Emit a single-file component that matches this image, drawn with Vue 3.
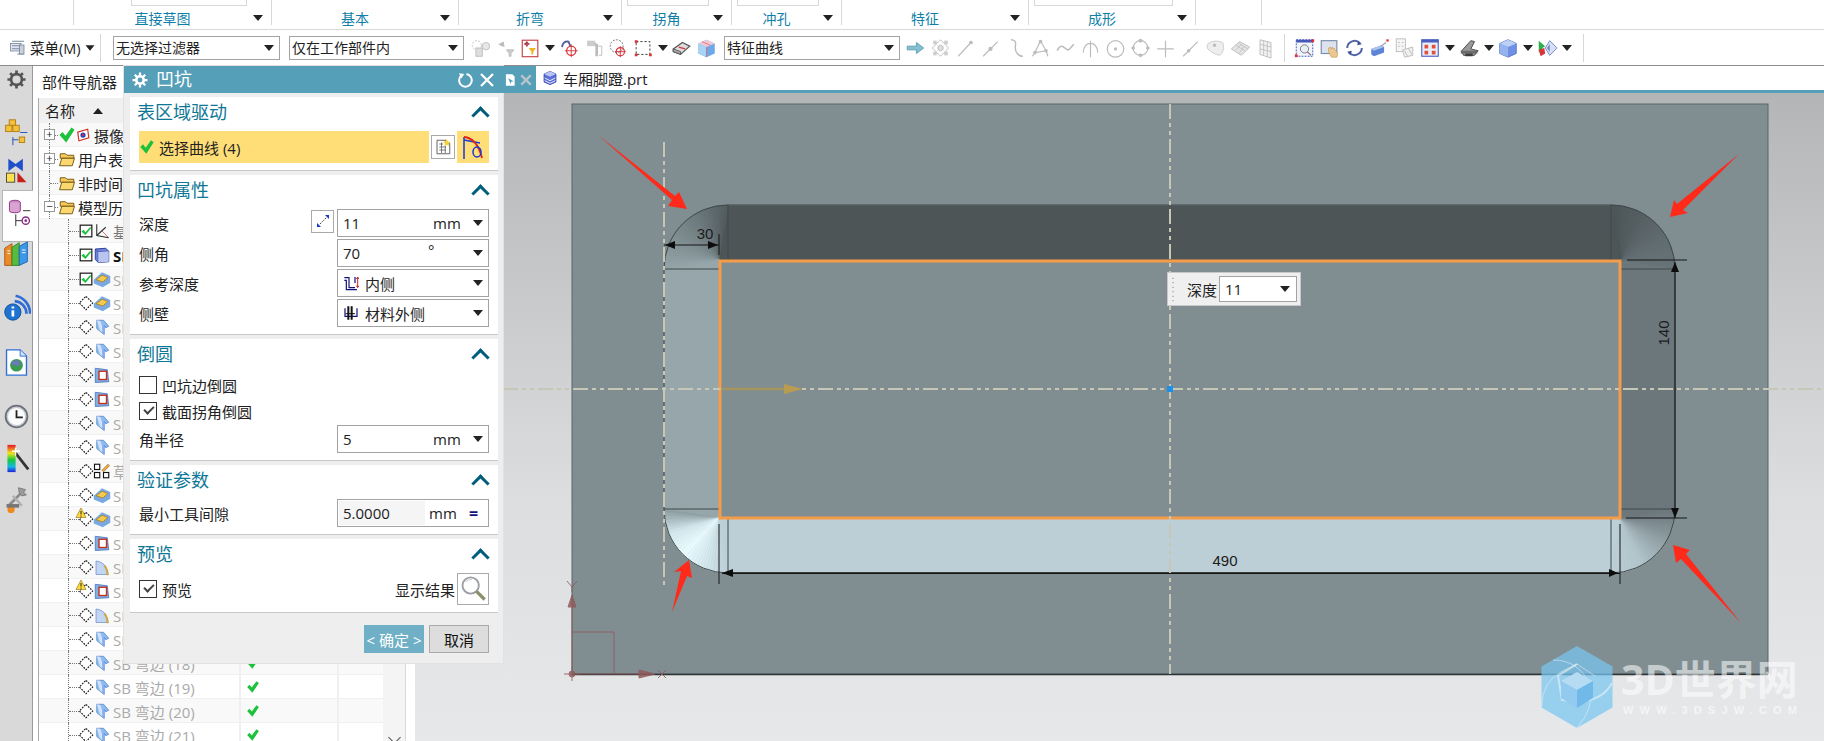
<template>
  <div class="app">
    <div class="ribbon">
      <div v-for="g in groups" :key="g.x" class="group" :style="{ width: g.w + 'px' }">
        <div class="group-top">
          <div v-if="g.box" class="gallery" :style="{ marginLeft: g.ml + 'px', width: g.box + 'px' }"></div>
          <div v-if="g.cut" class="cut-text" :style="{ marginLeft: g.ml + 'px' }">{{ g.cut }}</div>
        </div>
        <div class="group-label">{{ g.t }}</div>
        <i v-if="g.t" class="tri group-tri"></i>
      </div>
    </div>

    <div class="toolbar">
      <svg class="ic menu-ic" viewBox="0 0 24 24" v-html="icons.menu"></svg>
      <span class="menu-text">菜单(M)</span>
      <i class="tri menu-tri"></i>
      <span class="tool-sep first"></span>
      <div class="select s1">无选择过滤器<i class="tri"></i></div>
      <div class="select s2">仅在工作部件内<i class="tri"></i></div>
      <div class="slots s-left">
        <template v-for="(t, i) in toolsLeft" :key="i">
          <i v-if="t === '>'" class="tri slot-tri"></i>
          <svg v-else class="ic slot" viewBox="0 0 24 24" v-html="icons[t]"></svg>
        </template>
      </div>
      <div class="select s3">特征曲线<i class="tri"></i></div>
      <div class="slots s-mid">
        <svg v-for="t in toolsSnap" :key="t" class="ic slot" viewBox="0 0 24 24" v-html="icons[t]"></svg>
      </div>
      <span class="tool-sep second"></span>
      <div class="slots s-right">
        <template v-for="(t, i) in toolsRight" :key="i">
          <i v-if="t === '>'" class="tri slot-tri"></i>
          <svg v-else class="ic slot" viewBox="0 0 24 24" v-html="icons[t]"></svg>
        </template>
      </div>
      <span class="tool-sep third"></span>
    </div>

    <div class="main">
      <div class="rail">
        <div v-for="r in rail" :key="r.i" class="rail-item" :class="{ active: r.active }" :style="{ marginTop: r.mt + 'px' }">
          <svg class="rail-ic" viewBox="0 0 32 32" v-html="icons[r.i]"></svg>
        </div>
      </div>

      <div class="nav">
        <div class="nav-title">部件导航器</div>
        <div class="nav-body">
          <div class="tree">
            <div class="tree-head">
              <span class="col-name">名称</span>
              <i class="tri up"></i>
            </div>
            <div v-for="(r, i) in rows" :key="i" class="row" :class="{ odd: i % 2 === 0 }">
              <div class="col-main">
                <template v-if="r.l === 0">
                  <span class="gutter g0">
                    <span class="hline"></span>
                    <span v-if="r.exp" class="expander">{{ r.exp }}</span>
                  </span>
                  <svg v-if="r.chk" class="ic s18" viewBox="0 0 24 24" v-html="icons.check"></svg>
                  <svg v-if="r.chk" class="ic s14" viewBox="0 0 24 24" v-html="icons.camera"></svg>
                  <svg v-else class="ic s18" viewBox="0 0 24 24" v-html="icons.folder"></svg>
                  <span class="row-text black" :class="r.chk ? 'clip-cam' : 'clip-top'">{{ r.t }}</span>
                </template>
                <template v-else>
                  <span class="gutter g1"><span class="hline"></span></span>
                  <span class="state">
                    <svg v-if="r.on" class="ic s14" viewBox="0 0 24 24" v-html="icons.checked"></svg>
                    <svg v-else class="ic diamond" viewBox="0 0 24 24" v-html="icons.diamond"></svg>
                    <svg v-if="r.warn" class="ic warn" viewBox="0 0 24 24" v-html="icons.warn"></svg>
                  </span>
                  <svg class="ic s18" viewBox="0 0 24 24" v-html="icons[r.icon]"></svg>
                  <span class="row-text" :class="{ bold: r.bold, mid: r.mid, 'clip-sub': i < 22 }">{{ r.t }}</span>
                </template>
              </div>
              <div class="col-check">
                <svg v-if="i >= 22" class="ic s14" viewBox="0 0 24 24" v-html="icons.check"></svg>
              </div>
              <div class="col-extra"></div>
            </div>
          </div>
          <div class="scroll"><span class="scroll-down"></span></div>
          <div class="nav-end"></div>
        </div>
      </div>

      <div class="view">
        <div class="tabs">
          <div class="tab-tools"></div>
          <div class="tab">
            <svg class="ic s16" viewBox="0 0 24 24" v-html="icons.part"></svg>
            <span>车厢脚蹬.prt</span>
          </div>
        </div>
        <svg class="canvas" viewBox="415 93 1409 648" width="1409" height="648">
          <defs>
            <linearGradient id="bg" x1="0" y1="0" x2="0" y2="1">
              <stop offset="0" stop-color="#b3b5b6" />
              <stop offset="0.62" stop-color="#dcddde" />
              <stop offset="1" stop-color="#e7e8ea" />
            </linearGradient>
          </defs>
          <rect x="415" y="93" width="1409" height="648" fill="url(#bg)" />
          <rect x="572" y="104" width="1196" height="570" fill="#808e92" stroke="#59666a" />
          <path d="M572 674.5H1768" stroke="#2e3436" stroke-width="1.4" />

          <rect x="719" y="205.5" width="901" height="55" fill="#4d5557" />
          <rect x="719" y="518" width="901" height="55" fill="#bccfd6" />
          <rect x="664.5" y="260" width="55" height="258" fill="#97a6ab" />
          <rect x="1620" y="260" width="55" height="258" fill="#6c777c" />
          <polygon v-for="(w, i) in wedges" :key="i" :points="w.p" :fill="w.c" :stroke="w.c" stroke-width="0.6" />
          <path d="M728 205H1611A64 64 0 0 1 1675 269V509A64 64 0 0 1 1611 573H728A64 64 0 0 1 664 509V269A64 64 0 0 1 728 205Z" fill="none" stroke="#3f484a" />
          <path d="M728 205V260M1611 205V260M664 269H719M1620 269H1675M664 509H719M1620 509H1675M728 518V573M1611 518V573" fill="none" stroke="#3f484a" />
          <path d="M728 573H1611" stroke="#222" stroke-width="1.4" />

          <rect x="720" y="261" width="900" height="257" fill="#808e92" stroke="#f59c48" stroke-width="3" />

          <path class="dash" d="M1170 104V674" />
          <path class="dash" d="M503 389H1824" />
          <path class="dash" d="M664 142V586" />

          <path d="M721 389H792" stroke="#a8945e" stroke-width="2.5" />
          <polygon points="784,384 803,389 784,394" fill="#b89c52" />
          <rect x="1167" y="386" width="6" height="6" fill="#1c8fe6" />

          <g class="dim">
            <path d="M664 245H719M719 234V255" />
            <polygon points="665,245 675,241 675,249" />
            <polygon points="718,245 708,241 708,249" />
            <text x="705" y="239" text-anchor="middle">30</text>

            <path d="M1675 262V518M1627 260H1687M1626 518H1687" />
            <polygon points="1675,262 1671,272 1679,272" />
            <polygon points="1675,518 1671,508 1679,508" />
            <text transform="translate(1669 333) rotate(-90)" text-anchor="middle">140</text>

            <path d="M722 573.5H1620M719 524V584M1620 524V584" />
            <polygon points="722,573 733,569 733,577" />
            <polygon points="1618,573 1609,569 1609,577" />
            <text x="1225" y="566" text-anchor="middle">490</text>
          </g>

          <g fill="#ff2a1a">
            <polygon points="598,135 675,196 679,192 687,209 668,206 672,200" />
            <polygon points="1739,154 1677,204 1674,200 1670,217 1688,213 1683,210" />
            <polygon points="1741,623 1686,554 1690,550 1673,545 1676,563 1681,559" />
            <polygon points="672,612 681,571 674,572 689,560 692,578 687,576" />
          </g>

          <g class="ucs">
            <path d="M572 674V600M572 632H614V674M572 674H640" fill="none" />
            <polygon points="572,595 568,607 576,607" />
            <polygon points="655,674 639,670 639,678" />
            <path d="M567 581L572 587M577 581L572 587M572 587V592M658 670L666 678M666 670L658 678" fill="none" />
            <circle cx="572" cy="674" r="3" />
            <path d="M564 674H580M572 667V681" fill="none" />
          </g>

          <g class="mark">
            <polygon points="1577,646 1612.5,666.5 1612.5,707.5 1577,728 1541.5,707.5 1541.5,666.5" fill="#78c6f0" opacity="0.72" />
            <path d="M1553 660Q1580 660 1591 687Q1594 708 1577 728M1541.5 707Q1542 682 1561 672L1577 664L1595 676" fill="none" stroke="#e9f3f8" stroke-width="1" opacity="0.55" />
            <path d="M1612 683Q1600 706 1562 700L1558 676L1577 664" fill="none" stroke="#e9f3f8" stroke-width="2" opacity="0.6" />
            <polygon points="1577,672 1593,681 1577,690 1561,681" fill="#b6dcf4" />
            <polygon points="1561,681 1577,690 1577,708 1561,698" fill="#93caf0" />
            <polygon points="1593,681 1577,690 1577,708 1593,698" fill="#70b9e9" />
            <text class="mark-big" x="1621" y="695">3D世界网</text>
            <text class="mark-small" x="1623" y="714" textLength="174">WWW.3DSJW.COM</text>
          </g>
        </svg>

        <div class="float-tip">
          <span class="grip"></span>
          <span class="float-label">深度</span>
          <div class="float-field">11<i class="tri"></i></div>
        </div>
      </div>

      <div class="dialog">
        <div class="dlg-title">
          <svg class="ic s18 dlg-gear" viewBox="0 0 24 24" v-html="icons.gearWhite"></svg>
          <span class="dlg-name">凹坑</span>
          <svg class="ic s18 dlg-reset" viewBox="0 0 24 24" v-html="icons.reset"></svg>
          <svg class="ic s18 dlg-close" viewBox="0 0 24 24" v-html="icons.closeWhite"></svg>
          <svg class="ic s14 dlg-page" viewBox="0 0 24 24" v-html="icons.pageWhite"></svg>
          <svg class="ic s14" viewBox="0 0 24 24" v-html="icons.closeGrey"></svg>
        </div>
        <div class="dlg-body">
          <section class="sec">
            <div class="sec-head">表区域驱动<i class="chev"></i></div>
            <div class="curve-row">
              <div class="curve-pick">
                <svg class="ic s16" viewBox="0 0 24 24" v-html="icons.check"></svg>
                <span>选择曲线 (4)</span>
              </div>
              <button class="square-btn"><svg class="ic s18" viewBox="0 0 24 24" v-html="icons.sketchNew"></svg></button>
              <div class="curve-ic"><svg class="ic" viewBox="0 0 24 24" v-html="icons.curvePick"></svg></div>
            </div>
          </section>

          <section class="sec">
            <div class="sec-head">凹坑属性<i class="chev"></i></div>
            <div class="form-row">
              <label>深度</label>
              <button class="square-btn small"><svg class="ic s16" viewBox="0 0 24 24" v-html="icons.cross"></svg></button>
              <div class="field"><span class="val">11</span><span class="unit">mm</span><i class="tri"></i></div>
            </div>
            <div class="form-row">
              <label>侧角</label>
              <div class="field"><span class="val">70</span><span class="unit deg">°</span><i class="tri"></i></div>
            </div>
            <div class="form-row">
              <label>参考深度</label>
              <div class="field"><svg class="ic s16 opt-ic" viewBox="0 0 24 24" v-html="icons.inner"></svg><span class="val opt">内侧</span><i class="tri"></i></div>
            </div>
            <div class="form-row">
              <label>侧壁</label>
              <div class="field"><svg class="ic s16 opt-ic" viewBox="0 0 24 24" v-html="icons.wall"></svg><span class="val opt">材料外侧</span><i class="tri"></i></div>
            </div>
          </section>

          <section class="sec">
            <div class="sec-head">倒圆<i class="chev"></i></div>
            <div class="check-row"><span class="box"></span>凹坑边倒圆</div>
            <div class="check-row"><span class="box ticked"></span>截面拐角倒圆</div>
            <div class="form-row">
              <label>角半径</label>
              <div class="field"><span class="val">5</span><span class="unit">mm</span><i class="tri"></i></div>
            </div>
          </section>

          <section class="sec">
            <div class="sec-head">验证参数<i class="chev"></i></div>
            <div class="form-row">
              <label>最小工具间隙</label>
              <div class="field"><span class="val shaded">5.0000</span><span class="unit">mm</span><span class="equals">=</span></div>
            </div>
          </section>

          <section class="sec">
            <div class="sec-head">预览<i class="chev"></i></div>
            <div class="preview-row">
              <div class="check-row plain"><span class="box ticked"></span>预览</div>
              <div class="preview-right">
                <span>显示结果</span>
                <button class="square-btn big"><svg class="ic lens" viewBox="0 0 24 24" v-html="icons.lens"></svg></button>
              </div>
            </div>
          </section>

          <div class="dlg-foot">
            <button class="btn ok">&lt; 确定 &gt;</button>
            <button class="btn cancel">取消</button>
          </div>
        </div>
      </div>
    </div>
  </div>
</template>

<script setup>
const groups = [
  { x: 0, w: 74, t: '' },
  { x: 74, w: 198, t: '直接草图', ml: 57, box: 116 },
  { x: 272, w: 187, t: '基本', ml: 64, cut: '拐弯数量' },
  { x: 459, w: 163, t: '折弯' },
  { x: 622, w: 110, t: '拐角', ml: 5, box: 82 },
  { x: 732, w: 110, t: '冲孔', ml: 5, box: 82 },
  { x: 842, w: 187, t: '特征' },
  { x: 1029, w: 167, t: '成形', ml: 5, box: 139 },
  { x: 1196, w: 66, t: '' },
]

const toolsLeft = ['f1', 'f2', 'f3', '>', 'f4', 'f5', 'f6', 'f7', '>', 'f8', 'f9']
const toolsSnap = ['n0', 'n1', 'n2', 'n3', 'n4', 'n5', 'n6', 'n7', 'n8', 'n9', 'n10', 'n11', 'n12', 'n13', 'n14']
const toolsRight = ['v1', 'v2', 'v3', 'v4', 'v5', 'v6', '>', 'v7', '>', 'v8', '>', 'v9', '>']

const rail = [
  { i: 'gear', mt: 0 },
  { i: 'r1', mt: 29 },
  { i: 'r2', mt: 13 },
  { i: 'r3', mt: 9, active: true },
  { i: 'r4', mt: 0 },
  { i: 'r5', mt: 29 },
  { i: 'r6', mt: 31 },
  { i: 'r7', mt: 30 },
  { i: 'r8', mt: 18 },
  { i: 'r9', mt: 17 },
]

const rows = [
  { l: 0, exp: '+', chk: true, t: '摄像机' },
  { l: 0, exp: '+', t: '用户表达式' },
  { l: 0, t: '非时间戳记' },
  { l: 0, exp: '−', t: '模型历史记录' },
  { l: 1, on: true, icon: 'datum', t: '基准坐标系', mid: true },
  { l: 1, on: true, icon: 'solid', t: 'SB 突出块', bold: true },
  { l: 1, on: true, icon: 'sheet', t: 'SB 凹坑' },
  { l: 1, icon: 'sheet', t: 'SB 凹坑' },
  { l: 1, icon: 'bend', t: 'SB 弯边' },
  { l: 1, icon: 'bend', t: 'SB 弯边' },
  { l: 1, icon: 'pocket', t: 'SB 法向' },
  { l: 1, icon: 'pocket', t: 'SB 法向' },
  { l: 1, icon: 'bend', t: 'SB 弯边' },
  { l: 1, icon: 'bend', t: 'SB 弯边' },
  { l: 1, icon: 'sketch', t: '草图' },
  { l: 1, icon: 'sheet', t: 'SB 凹坑' },
  { l: 1, icon: 'sheet', warn: true, t: 'SB 凹坑' },
  { l: 1, icon: 'pocket', t: 'SB 法向' },
  { l: 1, icon: 'round', t: 'SB 倒角' },
  { l: 1, icon: 'pocket', warn: true, t: 'SB 法向' },
  { l: 1, icon: 'round', t: 'SB 倒角' },
  { l: 1, icon: 'bend', t: 'SB 弯边' },
  { l: 1, icon: 'bend', t: 'SB 弯边 (18)' },
  { l: 1, icon: 'bend', t: 'SB 弯边 (19)' },
  { l: 1, icon: 'bend', t: 'SB 弯边 (20)' },
  { l: 1, icon: 'bend', t: 'SB 弯边 (21)' },
]

const g = '#bcbcbc'
const icons = {
  menu: '<rect x="2" y="6" width="14" height="10" fill="#dfe6ee" stroke="#6d7f93"/><path d="M4 3h16M4 9h16M4 13h16M11 20h9" stroke="#7a8ba0" stroke-width="1.6"/><rect x="14" y="8" width="6" height="12" fill="#c9d2dc" stroke="#6d7f93"/>',
  f1: `<circle cx="8" cy="9" r="5" fill="none" stroke="${g}" stroke-dasharray="2 1.5"/><rect x="7" y="12" width="7" height="9" fill="#ddd" stroke="${g}"/><circle cx="18" cy="10" r="4" fill="#e8e8e8" stroke="${g}"/>`,
  f2: `<path d="M4 8l6-3 1 6-3-1z" fill="${g}"/><path d="M13 14h8l-3 4v3h-2v-3z" fill="#ccc" stroke="${g}"/>`,
  f3: '<rect x="3" y="3.5" width="17" height="18" fill="#fff" stroke="#c43a40" stroke-width="1.2"/><path d="M8 4.5v6M5 7.5h6" stroke="#a34" stroke-width="1.2"/><circle cx="8" cy="7.5" r="1.7" fill="none" stroke="#a34"/><path d="M10 12h8l-3 4v3h-2v-3z" fill="#f0b429"/>',
  f4: '<path d="M5 11Q6 4 12 5l2 5" fill="none" stroke="#565f9c" stroke-width="2"/><circle cx="15" cy="15" r="5" fill="none" stroke="#d8343a" stroke-width="1.4"/><path d="M15 8v14M8 15h14" stroke="#d8343a"/>',
  f5: `<rect x="5" y="4" width="9" height="6" fill="#ccc"/><path d="M13 6l4 2v13h-3V10z" fill="${g}"/><path d="M17 10h4v10h-3" fill="none" stroke="${g}"/>`,
  f6: '<circle cx="10" cy="10" r="7" fill="none" stroke="#666" stroke-dasharray="2 1.5"/><circle cx="14" cy="16" r="4.5" fill="none" stroke="#d8343a" stroke-width="1.3"/><path d="M14 10v12M8 16h12" stroke="#d8343a"/>',
  f7: '<rect x="4" y="5" width="15" height="14" fill="none" stroke="#333" stroke-dasharray="2.5 2"/><rect x="2.5" y="3.5" width="3" height="3" fill="#d8343a"/><rect x="18" y="18" width="3" height="3" fill="#d8343a"/><rect x="2.5" y="18" width="3" height="3" fill="#d8343a"/>',
  f8: '<path d="M3 13l10-7 8 4-10 9-8-3z" fill="#ddd" stroke="#555" stroke-width="1.3"/><path d="M3 13v3l8 3v-3z" fill="#aaa" stroke="#555"/><path d="M9 11l7 2" stroke="#d8343a" stroke-width="1.5"/>',
  f9: '<path d="M12 3l9 4v11l-9 4-9-4V7z" fill="#6da8ea"/><path d="M12 3l9 4-9 4-9-4z" fill="#f2c9d5"/><path d="M3 7l9 4v11l-9-4z" fill="#a9d3f5"/><path d="M12 11v11M7 5l9 4" stroke="#e25050" stroke-width=".7"/>',
  n0: '<path d="M3 12h10V8l8 6-8 6v-4H3z" transform="translate(0 -2)" fill="#86c0d0" stroke="#5b9cb2"/>',
  n1: `<path d="M12 3l9 9-9 9-9-9z" fill="none" stroke="${g}"/><circle cx="12" cy="12" r="3" fill="#ddd" stroke="${g}"/><g fill="#ccc"><rect x="4" y="4" width="4" height="4"/><rect x="16" y="4" width="4" height="4"/><rect x="4" y="16" width="4" height="4"/><rect x="16" y="16" width="4" height="4"/></g>`,
  n2: `<path d="M4 21L18 6" stroke="${g}" stroke-width="1.3"/><circle cx="18" cy="6" r="2" fill="${g}"/>`,
  n3: `<path d="M4 21L20 5" stroke="${g}" stroke-width="1.3"/><circle cx="12" cy="13" r="2.3" fill="${g}"/>`,
  n4: `<path d="M7 3q6 0 5 6t2 9q2 3 6 3" fill="none" stroke="${g}" stroke-width="1.6"/>`,
  n5: `<path d="M12 4L6 17M12 4l6 11M6 17l12-2M3 21l3-4M18 15l2 6" fill="none" stroke="${g}" stroke-width="1.3"/><g fill="${g}"><circle cx="12" cy="5" r="2"/><circle cx="6" cy="17" r="2"/><circle cx="18" cy="15" r="2"/></g>`,
  n6: `<path d="M3 15q3-7 7-4t5 3 6-6" fill="none" stroke="${g}" stroke-width="1.8"/>`,
  n7: `<path d="M4 17Q5 7 12 7t8 10M12 4v18" fill="none" stroke="${g}" stroke-width="1.3"/>`,
  n8: `<circle cx="12" cy="13" r="9" fill="none" stroke="${g}" stroke-width="1.3"/><circle cx="12" cy="13" r="1.7" fill="${g}"/>`,
  n9: `<circle cx="12" cy="12" r="8" fill="none" stroke="${g}" stroke-width="1.3"/><g fill="${g}"><circle cx="12" cy="4" r="2"/><circle cx="12" cy="20" r="2"/><circle cx="4" cy="12" r="2"/><circle cx="20" cy="12" r="2"/></g>`,
  n10: `<path d="M12 4v18M3 13h18" stroke="${g}" stroke-width="1.3"/>`,
  n11: `<path d="M4 21L20 5" stroke="${g}" stroke-width="1.3"/><circle cx="10" cy="15" r="2" fill="${g}"/>`,
  n12: `<path d="M3 8Q10 2 20 6l1 6q-2 8-5 8-10-3-13-8z" fill="#eee" stroke="#ccc"/><circle cx="11" cy="9" r="1.8" fill="${g}"/>`,
  n13: `<path d="M2 13l9-8 11 6-9 9z" fill="#e4e4e4" stroke="${g}"/><path d="M7 9l10 6M10 7l10 6M11 17l5-7M7 14l6-6" stroke="${g}" stroke-width=".8"/>`,
  n14: `<path d="M6 3l12 3v17L6 19z" fill="#f2f2f2" stroke="${g}"/><path d="M6 8l12 3M6 13l12 3M10 4v16M14 5v17" stroke="${g}" stroke-width=".9"/>`,
  v1: '<rect x="3" y="3" width="18" height="18" fill="#f4f4fb" stroke="#3a4fc0" stroke-dasharray="2 1.3"/><rect x="3" y="3" width="18" height="3" fill="#4358b8"/><circle cx="12" cy="13" r="4.5" fill="#e8eef2" stroke="#778"/><path d="M15 16l4 4" stroke="#889" stroke-width="1.6"/><rect x="1.5" y="19" width="3" height="3" fill="#e02b2b"/><rect x="19.5" y="2.5" width="3" height="3" fill="#e02b2b"/>',
  v2: '<rect x="3" y="4" width="17" height="14" fill="#dde3ee" stroke="#7d8fb0" stroke-width="1.3"/><path d="M11 12l2-1 1 2 1-2 1 2 1-1 1 2 3 4-1 4h-6l-3-6z" fill="#ecc890" stroke="#c59a60" stroke-width=".7"/>',
  v3: '<path d="M4 12a8 8 0 0 1 14-5" fill="none" stroke="#5264a8" stroke-width="2.2"/><path d="M20 12a8 8 0 0 1-14 5" fill="none" stroke="#5264a8" stroke-width="2.2"/><path d="M16 4l4 4-5 1zM8 20l-4-4 5-1z" fill="#3f4f95"/>',
  v4: '<path d="M3 13l11-4 3 2v6l-11 4-3-2z" fill="#5e84d8"/><path d="M3 13l11-4 3 2-11 4z" fill="#a9c2ee"/><path d="M14 10l5-4" stroke="#99a" stroke-width="1.2"/><rect x="19.5" y="2.5" width="2.5" height="2.5" fill="#d33"/>',
  v5: `<rect x="3" y="2" width="10" height="14" fill="#f5f5f5" stroke="${g}"/><path d="M5 6h2M9 6h2M5 10h2M9 10h2" stroke="${g}"/><path d="M10 14l11-3v9l-9 2z" fill="#f0f0f0" stroke="${g}"/><path d="M12 15l4 7M16 12l4 7" stroke="${g}"/>`,
  v6: '<rect x="3" y="3" width="18" height="18" fill="#e9edf8" stroke="#4a5fc0" stroke-width="1.2"/><rect x="3" y="3" width="18" height="3" fill="#4a5fc0"/><g fill="#e0503a"><rect x="6" y="8.5" width="4" height="4"/><rect x="14" y="8.5" width="4" height="4"/><rect x="6" y="15" width="4" height="4"/><rect x="14" y="15" width="4" height="4"/></g>',
  v7: '<path d="M4 15l10-11 4 1-4 8 8 2-4 5H6z" fill="#9a9a9a" stroke="#444"/><path d="M3 15h18v3H3z" fill="#6a6a6a"/><path d="M8 18h8v3H8z" fill="#3d3d3d"/>',
  v8: '<path d="M12 3l9 4v11l-9 4-9-4V7z" fill="#6f90e4" stroke="#5672c6"/><path d="M12 3l9 4-9 4-9-4z" fill="#bcd0f5"/><path d="M3 7l9 4v11l-9-4z" fill="#95b3ee"/>',
  v9: '<path d="M3 4l7 6-3 2v3l-4 2z" fill="#2bb04a"/><path d="M3 14l6-2 1 6-5 3z" fill="#d8343a"/><path d="M15 4l8 8-8 8-5-8z" fill="#d7dff2" stroke="#6f84c6"/><path d="M15 8v8l-3-4z" fill="#6f84c6"/>',
  gear: '<circle cx="16" cy="16" r="6" fill="none" stroke="#555" stroke-width="3"/><g stroke="#555" stroke-width="3"><path d="M16 6v4M16 22v4M6 16h4M22 16h4M9 9l2.5 2.5M20.5 20.5L23 23M23 9l-2.5 2.5M11.5 20.5L9 23"/></g>',
  r1: '<rect x="8" y="2" width="7" height="7" fill="#f3c13a" stroke="#b07c10"/><rect x="4" y="8" width="7" height="7" fill="#f3c13a" stroke="#b07c10"/><rect x="12" y="8" width="7" height="7" fill="#f3c13a" stroke="#b07c10"/><path d="M12 21v9M12 24h6M20 16h8" stroke="#1a49b5"/><rect x="19" y="21" width="6" height="6" fill="#f3c13a" stroke="#b07c10"/>',
  r2: '<path d="M7 4l8 6 8-6v14l-8-6-8 6z" fill="#1f50c9"/><rect x="5" y="20" width="9" height="10" fill="#ffe14d" stroke="#444"/><path d="M17 19l10 11H17z" fill="#c51f16"/>',
  r3: '<ellipse cx="12" cy="5" rx="6" ry="2.5" fill="#c98bbd" stroke="#8b2a86"/><path d="M6 5v9c0 3 12 3 12 0V5" fill="#d9a2cf" stroke="#8b2a86"/><path d="M21 14h8M13 18v13M13 25h7" stroke="#222"/><circle cx="24" cy="25" r="4" fill="none" stroke="#8b2a86" stroke-width="1.5"/><circle cx="24" cy="25" r="1.5" fill="#8b2a86"/>',
  r4: '<path d="M3 9l8-5v24H3z" fill="#ea8a28" stroke="#a85c10"/><path d="M11 8l8-5v25h-8z" fill="#58bb3d" stroke="#2f8423"/><path d="M19 7l9-5v22l-9 4z" fill="#3e97e6" stroke="#1c69b5"/><path d="M6 12h3M6 15h3M22 11h4M22 14h4" stroke="#fff"/>',
  r5: '<path d="M14 9a14 14 0 0 1 13 14M15 3a20 20 0 0 1 16 20" fill="none" stroke="#2e6ed6" stroke-width="3"/><circle cx="12" cy="21" r="9" fill="#1c73d1" stroke="#0d4d9c"/><path d="M12 15v2M12 19v7" stroke="#fff" stroke-width="3"/>',
  r6: '<path d="M5 2h15l7 7v21H5z" fill="#fff" stroke="#2e6ed6" stroke-width="1.5"/><path d="M20 2v7h7" fill="#cfe2fa" stroke="#2e6ed6"/><circle cx="16" cy="19" r="7" fill="#3a9b52"/><path d="M11 16q5-5 9 0-1 5-5 3t-4 2z" fill="#7a6ee0" opacity=".8"/>',
  r7: '<circle cx="16" cy="16" r="12" fill="#c9cdd2" stroke="#6d7278" stroke-width="2"/><circle cx="16" cy="16" r="9.5" fill="#fbfbfb"/><path d="M16 9v8h7" fill="none" stroke="#222" stroke-width="2"/>',
  r8: '<defs><linearGradient id="rb" x1="0" y1="0" x2="0" y2="1"><stop offset="0" stop-color="#e8112d"/><stop offset=".3" stop-color="#f5e617"/><stop offset=".55" stop-color="#16c83c"/><stop offset=".8" stop-color="#16b8e0"/><stop offset="1" stop-color="#1f22d8"/></linearGradient></defs><rect x="6" y="1" width="9" height="30" fill="url(#rb)"/><path d="M15 10l14 18" stroke="#333" stroke-width="3"/><path d="M15 4v9M11 8h9" stroke="#fff" stroke-width="1.5"/>',
  r9: '<path d="M8 22L21 9" stroke="#8a8a8a" stroke-width="3"/><path d="M18 3l8 2-2 3 3 3-5 1-3-3z" fill="#9a9a9a" stroke="#666" stroke-width=".7"/><path d="M12 12l10 11" stroke="#b0b0b0" stroke-width="2.5"/><circle cx="10" cy="27" r="4" fill="#f08a1c"/><path d="M5 21h14v4H5z" fill="#777"/>',
  check: '<path d="M2 12l4-4 4 5L18 2l4 3-11 17z" fill="#1cc13c"/>',
  camera: '<path d="M3 7l17-5 2 15-17 5z" fill="#fff" stroke="#d63022" stroke-width="2"/><circle cx="12" cy="12" r="4.5" fill="#2b45b8"/><circle cx="12" cy="12" r="1.8" fill="#e24"/>',
  folder: '<path d="M3 5h7l2 2h9v4H3z" fill="#f6cb5a" stroke="#6d4f0a" stroke-width="1.2"/><path d="M2 21l3-10h17l-3 10z" fill="#fbd770" stroke="#6d4f0a" stroke-width="1.2"/>',
  diamond: '<path d="M12 2l10 10-10 10L2 12z" fill="#fff" stroke="#111" stroke-width="1.7" stroke-dasharray="2.6 1.8"/>',
  checked: '<rect x="2" y="2" width="20" height="20" fill="#fff" stroke="#111" stroke-width="2"/><path d="M4 13l4-3 3 4 8-9 2 2-10 12z" fill="#1cc13c"/>',
  warn: '<path d="M12 2l10 19H2z" fill="#ffd83a" stroke="#8a6d10" stroke-width="1.2"/><path d="M12 8v7M12 17v2" stroke="#222" stroke-width="2"/>',
  bend: '<path d="M5 3h9l7 8-4 2-2-3v12l-4-3-6-5z" fill="#8dbaf0" stroke="#4d80cf"/><path d="M5 3l5 1 2 7v8l-3-3z" fill="#cfe3fb"/>',
  pocket: '<path d="M3 3l16 2 2 16-18 1z" fill="#7fb0e2" stroke="#3d6cb8"/><rect x="8" y="7" width="10" height="11" fill="#fff" stroke="#c62b1c" stroke-width="1.8"/>',
  sheet: '<path d="M1 13L12 3l11 5v9l-10 6-12-5z" fill="#79a9e0"/><path d="M4 13l8-6 8 3-7 6z" fill="#f5c94d" stroke="#a87a10"/>',
  round: '<path d="M4 4q14 1 16 18H4z" fill="#c2d6f3" stroke="#6f90cf"/><path d="M16 9q5 6 5 14h-3q0-8-4-12z" fill="#c9a94f"/>',
  sketch: '<g fill="#fff" stroke="#111" stroke-width="1.5"><rect x="2" y="3" width="7" height="7"/><rect x="2" y="14" width="7" height="7"/><rect x="14" y="14" width="7" height="7"/></g><path d="M12 11l8-8 2 2-8 8z" fill="#f0b429" stroke="#964"/>',
  solid: '<path d="M3 4l14-1 4 4v14l-14 1-4-4z" fill="#6d82d8" stroke="#2d3f9c" stroke-width="1.3"/><path d="M3 4l4 4 14-1M7 8v14" fill="none" stroke="#2d3f9c"/><path d="M7 8l14-1v14l-14 1z" fill="#b9c5ee"/>',
  datum: '<path d="M5 3v15l16 3M5 18L17 7" fill="none" stroke="#333" stroke-width="1.5"/><path d="M12 12l8 8" stroke="#c44"/>',
  part: '<path d="M12 2l9 4v12l-9 4-9-4V6z" fill="#5b6fd8" stroke="#26368f"/><path d="M12 2l9 4-9 4-9-4z" fill="#b7c4f5"/><path d="M4 12l8 4 8-4M4 16l8 4 8-4" fill="none" stroke="#fff" stroke-width="1.3"/>',
  gearWhite: '<circle cx="12" cy="12" r="5" fill="none" stroke="#fff" stroke-width="3.5"/><path d="M12 2v4M12 18v4M2 12h4M18 12h4M5 5l3 3M16 16l3 3M19 5l-3 3M8 16l-3 3" stroke="#fff" stroke-width="3"/>',
  reset: '<path d="M14 4a8.5 8.5 0 1 1-7 2" fill="none" stroke="#fff" stroke-width="2.6"/><path d="M4 3l7 1-4 6z" fill="#fff"/>',
  closeWhite: '<path d="M4 4l16 16M20 4L4 20" stroke="#fff" stroke-width="3"/>',
  closeGrey: '<path d="M4 4l16 16M20 4L4 20" stroke="#b8c4c9" stroke-width="4"/>',
  pageWhite: '<path d="M5 2h11l4 4v16H5z" fill="#fff"/><path d="M9 9l9 5-4 1-1 4z" fill="#569fb9"/>',
  sketchNew: '<path d="M4 3h12v4h5v14H4z" fill="#fff" stroke="#555" stroke-width="1.2"/><path d="M7 8h5M7 12h9M7 16h9M10 6v14M15 10v10" stroke="#555"/><path d="M17 1l1.500 3.5L22 5l-2.5 2.5L20 11l-3-2-3 2 .5-3.5L12 5l3.5-.5z" fill="#f6d23a"/>',
  curvePick: '<path d="M3 2v22M3 5l16 3" stroke="#1438d8" stroke-width="1.5" fill="none"/><path d="M3 2q13 1 18 21" fill="none" stroke="#e0231a" stroke-width="1.8"/><ellipse cx="16" cy="17" rx="4" ry="5" fill="none" stroke="#1438d8" stroke-width="1.5"/>',
  cross: '<path d="M4 20L20 4" stroke="#444" stroke-width="1.5" stroke-dasharray="3 2"/><path d="M15 3h6v6zM3 15v6h6z" fill="#1438c8"/>',
  inner: '<path d="M2 4h7v15h9M18 3v9" fill="none" stroke="#12127c" stroke-width="1.8"/><path d="M22 4v14M20 6l2-3 2 3M20 16l2 3 2-3" fill="none" stroke="#d0202a" stroke-width="1.5"/><path d="M2 8h3v14h16" fill="none" stroke="#12127c" stroke-width="1.8"/>',
  wall: '<path d="M3 5v12h18V5" fill="none" stroke="#12127c" stroke-width="1.8"/><path d="M8 2v20M13 2v20" stroke="#111" stroke-width="3"/><path d="M4 13h14" stroke="#111" stroke-width="1.5"/>',
  lens: '<circle cx="10" cy="9" r="7" fill="#fff" stroke="#9aa0a6" stroke-width="1.6"/><path d="M6 6a5 5 0 0 1 5-2" fill="none" stroke="#c9ced3"/><path d="M15 14l7 7" stroke="#8b8f6a" stroke-width="2.8"/>',
}

const mix = (a, b, t) => {
  const pa = [1, 3, 5].map((i) => parseInt(a.slice(i, i + 2), 16))
  const pb = [1, 3, 5].map((i) => parseInt(b.slice(i, i + 2), 16))
  return `rgb(${pa.map((v, i) => Math.round(v + (pb[i] - v) * t)).join(',')})`
}

// each corner of the pocket wall is a fan of thin wedges from the inner corner to the arc
const fan = (cx, cy, ax, ay, from, to, stops) => {
  const out = []
  const n = 28
  for (let i = 0; i < n; i++) {
    const pos = (i + 0.5) / n
    const s = Math.min(Math.floor(pos * (stops.length - 1)), stops.length - 2)
    const c = mix(stops[s], stops[s + 1], pos * (stops.length - 1) - s)
    const a0 = ((from + ((to - from) * i) / n) * Math.PI) / 180
    const a1 = ((from + ((to - from) * (i + 1)) / n) * Math.PI) / 180
    const p0 = `${cx + 64 * Math.cos(a0)},${cy + 64 * Math.sin(a0)}`
    const p1 = `${cx + 64 * Math.cos(a1)},${cy + 64 * Math.sin(a1)}`
    out.push({ p: `${ax},${ay} ${p0} ${p1}`, c })
  }
  return out
}

const wedges = [
  ...fan(728, 269, 719, 260, -90, -180, ['#535c5e', '#6c797c', '#7f8e92', '#93a3a7']),
  ...fan(1611, 269, 1620, 260, 0, -90, ['#687378', '#616c70', '#565f62', '#4d5557']),
  ...fan(728, 509, 719, 518, 180, 90, ['#8a999e', '#d2e6ec', '#e9fbff', '#d4e8ee', '#bccfd6']),
  ...fan(1611, 509, 1620, 518, 90, 0, ['#bccfd6', '#b2c5cb', '#8f9ea3', '#6c777c']),
]
</script>

<style scoped>
.app {
  width: 1824px;
  height: 741px;
  overflow: hidden;
  position: relative;
  display: flex;
  flex-direction: column;
  background: #fff;
  font-family: "Open Sans", "Noto Sans CJK SC", sans-serif;
  font-size: 15px;
  color: #222;
}
.ic {
  display: block;
  width: 24px;
  height: 24px;
  flex: none;
}
.s14 { width: 14px; height: 14px; }
.s16 { width: 16px; height: 16px; }
.s18 { width: 18px; height: 18px; }
.tri {
  display: block;
  flex: none;
  width: 0;
  height: 0;
  border-left: 5px solid transparent;
  border-right: 5px solid transparent;
  border-top: 6px solid #222;
}

.ribbon {
  height: 30px;
  flex: none;
  display: flex;
  border-bottom: 1px solid #d9d9d9;
  box-sizing: border-box;
}
.group {
  height: 25px;
  position: relative;
  border-right: 1px solid #d8d8d8;
  box-sizing: border-box;
  padding-right: 20px;
  text-align: center;
}
.group-top {
  position: absolute;
  left: 0;
  top: 0;
  width: 100%;
  height: 7px;
  overflow: hidden;
  text-align: left;
}
.gallery {
  height: 6px;
  border: 1px solid #d8d8d8;
  border-top: 0;
  box-sizing: border-box;
}
.cut-text {
  margin-top: -18px;
  font-size: 14px;
  line-height: 20px;
  color: #333;
}
.group-label {
  padding-top: 9px;
  font-size: 14px;
  line-height: 20px;
  color: #0f7fa8;
}
.group-tri {
  position: absolute;
  right: 8px;
  top: 15px;
}

.toolbar {
  height: 36px;
  flex: none;
  display: flex;
  align-items: center;
  box-sizing: border-box;
  border-bottom: 1px solid #8c8c8c;
  padding-left: 9px;
}
.menu-ic { width: 18px; height: 18px; }
.menu-text {
  margin-left: 3px;
  font-size: 14.5px;
  width: 54px;
  white-space: nowrap;
}
.menu-tri { margin-left: 1px; transform: scale(0.9); }
.tool-sep {
  width: 1px;
  height: 28px;
  background: #d8d8d8;
  flex: none;
}
.tool-sep.first { margin-left: 5px; margin-right: 12px; }
.tool-sep.second { margin-left: 6px; }
.tool-sep.third { margin-left: 10px; }
.select {
  height: 24px;
  box-sizing: border-box;
  border: 1px solid #a3a3a3;
  background: #fff;
  display: flex;
  align-items: center;
  justify-content: space-between;
  padding: 0 5px 0 2px;
  font-size: 14px;
  line-height: 22px;
}
.s1 { width: 167px; }
.s2 { width: 175px; margin-left: 9px; }
.s3 { width: 176px; margin-left: 5px; }
.slots { display: flex; align-items: center; }
.s-left { margin-left: 4px; }
.s-mid { margin-left: 3px; }
.s-right { margin-left: 7px; }
.slot { width: 22px; height: 22px; padding: 0 1.5px; }
.s-right .slot:nth-child(n + 6) { padding: 0 2px; }
.slot-tri { margin: 0 1.5px; }

.main {
  flex: 1;
  min-height: 0;
  display: flex;
  position: relative;
}
.rail {
  width: 33px;
  flex: none;
  background: #d9d9d9;
  border-right: 1px solid #9a9a9a;
  box-sizing: border-box;
  padding-top: 1px;
}
.rail-item {
  height: 24px;
  display: flex;
  justify-content: center;
  align-items: center;
}
.rail-item.active {
  height: 52px;
  margin-left: 2px;
  margin-right: -1px;
  padding: 10px 0 18px;
  box-sizing: border-box;
  background: #fff;
  border: 1px solid #b5b5b5;
  border-right: 0;
}
.rail-ic {
  width: 29px;
  height: 29px;
  flex: none;
}

.nav {
  width: 382px;
  flex: none;
  display: flex;
  flex-direction: column;
  background: #fff;
}
.nav-title {
  height: 32px;
  flex: none;
  padding: 0 0 0 9px;
  line-height: 32px;
  font-size: 15px;
}
.nav-body {
  flex: 1;
  min-height: 0;
  display: flex;
  padding-left: 5px;
}
.tree {
  width: 345px;
  flex: none;
  overflow: hidden;
  border-left: 1px solid #aaa;
  box-sizing: border-box;
}
.tree-head {
  height: 25px;
  display: flex;
  align-items: center;
  background: #f0f0f0;
  padding-left: 6px;
}
.col-name { width: 48px; font-size: 15px; }
.tri.up { border-top: 0; border-bottom: 6px solid #222; }
.row {
  height: 24px;
  display: flex;
  background: #fff;
  box-shadow: inset 0 -1px 0 #f0f0f0;
}
.row.odd { background: #f9f9f9; }
.col-main {
  width: 200px;
  flex: none;
  display: flex;
  align-items: center;
  white-space: nowrap;
  overflow: hidden;
}
.col-check {
  width: 100px;
  flex: none;
  box-sizing: border-box;
  border-left: 2px solid #f0f0f0;
  border-right: 2px solid #f0f0f0;
  display: flex;
  align-items: center;
  padding-left: 5px;
}
.col-extra { flex: 1; }
.gutter {
  height: 24px;
  flex: none;
  border-left: 1px dotted #777;
  box-sizing: border-box;
  display: flex;
  align-items: center;
  position: relative;
}
.g0 { width: 9px; margin-left: 10px; }
.g1 { width: 11px; margin-left: 29px; }
.hline { flex: 1; border-top: 1px dotted #777; }
.expander {
  position: absolute;
  left: -6px;
  top: 6px;
  width: 11px;
  height: 11px;
  box-sizing: border-box;
  background: #fff;
  border: 1px solid #999;
  font-size: 11px;
  line-height: 8px;
  text-align: center;
  color: #222;
}
.state { position: relative; width: 14px; height: 14px; flex: none; }
.diamond {
  position: absolute;
  left: -1px;
  top: -1px;
  width: 16px;
  height: 16px;
}
.warn {
  position: absolute;
  left: -4px;
  top: -5px;
  width: 12px;
  height: 12px;
}
.row-text {
  margin-left: 2px;
  font-size: 15px;
  color: #aaa;
  flex: none;
  overflow: hidden;
}
.row-text.black { color: #222; }
.row-text.mid { color: #777; }
.row-text.bold { color: #111; font-weight: 700; }
/* these rows run under the dialog, so only the part left of it is kept */
.clip-cam { margin-left: 4px; width: 31px; }
.clip-top { width: 47px; }
.clip-sub { width: 12px; }
.scroll {
  width: 22px;
  flex: none;
  display: flex;
  flex-direction: column;
  justify-content: flex-end;
  align-items: center;
  background: #f4f4f4;
}
.scroll-down {
  width: 8px;
  height: 8px;
  margin-bottom: -1px;
  border-right: 1.5px solid #555;
  border-bottom: 1.5px solid #555;
  transform: rotate(45deg);
}
.nav-end {
  width: 10px;
  flex: none;
  border-left: 1px solid #d8d8d8;
  border-right: 1px solid #8f8f8f;
  box-sizing: content-box;
}

.view {
  flex: 1;
  min-width: 0;
  display: flex;
  flex-direction: column;
  position: relative;
}
.tabs {
  height: 27px;
  flex: none;
  display: flex;
  background: #fff;
  border-bottom: 3px solid #569fb9;
  box-sizing: border-box;
}
.tab-tools {
  width: 121px;
  flex: none;
  background: #569fb9;
}
.tab {
  display: flex;
  align-items: center;
  gap: 5px;
  padding-left: 6px;
  font-size: 15px;
}
.canvas { display: block; flex: none; }
.dash {
  fill: none;
  stroke: #c6c7b6;
  stroke-width: 2;
  stroke-dasharray: 15 4 4 4 4 4;
}
.dim path { fill: none; stroke: #151515; stroke-width: 1; }
.dim polygon { fill: #0d0d0d; }
.dim text {
  font-family: "Liberation Sans", sans-serif;
  font-size: 15px;
  fill: #1c1c1c;
}
.ucs { stroke: #8e5a5a; fill: #8e5a5a; opacity: 0.85; }
.mark-big {
  font-family: "Open Sans", "Noto Sans CJK SC", sans-serif;
  font-size: 41px;
  font-weight: 700;
  fill: #fff;
  opacity: 0.55;
}
.mark-small {
  font-family: "Liberation Sans", sans-serif;
  font-size: 11px;
  font-weight: 700;
  fill: #fff;
  opacity: 0.6;
}
.float-tip {
  position: absolute;
  left: 752px;
  top: 206px;
  width: 134px;
  height: 34px;
  box-sizing: border-box;
  background: #efefef;
  border: 1px solid #c8c8c8;
  display: flex;
  align-items: center;
}
.grip {
  width: 6px;
  height: 26px;
  margin-left: 2px;
  flex: none;
  background-image: radial-gradient(#aaa 1.2px, transparent 1.3px);
  background-size: 6px 4.5px;
}
.float-label { margin-left: 11px; font-size: 15px; }
.float-field {
  margin-left: 2px;
  width: 78px;
  height: 26px;
  box-sizing: border-box;
  background: #fff;
  border: 1px solid #a3a3a3;
  display: flex;
  align-items: center;
  justify-content: space-between;
  padding: 0 6px 0 5px;
  font-size: 15px;
}

.dialog {
  position: absolute;
  left: 124px;
  top: 0;
  width: 379px;
  height: 597px;
  background: #eee;
  box-shadow: 0 0 0 1px #e2e2e2;
}
.dlg-title {
  height: 27px;
  width: 412px;
  display: flex;
  align-items: center;
  padding-left: 7px;
  box-sizing: border-box;
  background: #569fb9;
}
.dlg-name {
  margin-left: 7px;
  flex: 1;
  font-size: 18px;
  line-height: 27px;
  color: #fff;
}
.dlg-reset { margin-right: 4px; }
.dlg-close { margin-right: 7px; }
.dlg-page { margin-right: 2px; }
.dlg-title > .s14:last-child { margin-right: 3px; }
.dlg-body { padding: 4px 5px 0 6px; }
.sec {
  background: #fff;
  padding: 0 9px 7px;
  margin-bottom: 4px;
  border-bottom: 1px solid #c8c8c8;
  box-sizing: border-box;
}
.sec-head {
  height: 30px;
  margin: 0 -1px 4px -2px;
  display: flex;
  align-items: center;
  justify-content: space-between;
  font-size: 18px;
  line-height: 26px;
  color: #0f7796;
}
.chev {
  display: block;
  width: 10px;
  height: 10px;
  margin: 6px 3px 0 0;
  border-left: 3px solid #005f7c;
  border-top: 3px solid #005f7c;
  transform: rotate(45deg);
}
.curve-row { display: flex; align-items: center; height: 32px; }
.curve-pick {
  width: 290px;
  height: 32px;
  flex: none;
  background: #ffdd77;
  display: flex;
  align-items: center;
  gap: 4px;
  box-sizing: border-box;
  font-size: 15px;
}
.square-btn {
  width: 24px;
  height: 24px;
  flex: none;
  padding: 0;
  box-sizing: border-box;
  border: 1px solid #aaa;
  background: #fff;
  display: flex;
  align-items: center;
  justify-content: center;
}
.curve-row .square-btn { margin-left: 2px; }
.curve-ic {
  width: 32px;
  height: 32px;
  margin-left: 2px;
  flex: none;
  background: #ffdd77;
  display: flex;
  align-items: center;
  justify-content: center;
}
.form-row {
  height: 28px;
  margin-top: 2px;
  display: flex;
  align-items: center;
}
.sec-head + .form-row { margin-top: 0; }
.form-row label { flex: 1; font-size: 15px; }
.square-btn.small { margin-right: 3px; margin-bottom: 4px; width: 23px; height: 23px; }
.field {
  width: 152px;
  height: 28px;
  flex: none;
  box-sizing: border-box;
  border: 1px solid #a3a3a3;
  display: flex;
  align-items: center;
  padding-left: 5px;
  font-size: 15px;
}
.val { flex: 1; }
.val.opt { margin-left: 6px; }
.val.shaded {
  flex: none;
  width: 86px;
  margin-left: -4px;
  height: 24px;
  line-height: 24px;
  padding-left: 4px;
  background: #f5f5f5;
  box-sizing: border-box;
}
.val.shaded + .unit { margin-left: 4px; }
.unit { width: 40px; flex: none; }
.unit.deg { align-self: flex-start; line-height: 20px; width: 45px; }
.field .tri { margin-right: 5px; }
.equals {
  color: #12127c;
  font-size: 16px;
  font-weight: 700;
  width: 14px;
  flex: none;
}
.check-row {
  height: 24px;
  display: flex;
  align-items: center;
  gap: 5px;
  font-size: 15px;
}
.sec-head + .check-row + .check-row { margin-top: 2px; }
.box {
  width: 18px;
  height: 18px;
  box-sizing: border-box;
  flex: none;
  border: 1px solid #333;
  background: #fff;
  position: relative;
}
.box.ticked::after {
  content: "";
  position: absolute;
  left: 4px;
  top: 3px;
  width: 8px;
  height: 4px;
  border-left: 2px solid #444;
  border-bottom: 2px solid #444;
  transform: rotate(-45deg);
}
.preview-row {
  height: 32px;
  display: flex;
  align-items: center;
  justify-content: space-between;
}
.preview-right {
  display: flex;
  align-items: center;
  gap: 2px;
  font-size: 15px;
}
.square-btn.big { width: 32px; height: 32px; }
.lens { width: 28px; height: 28px; }
.dlg-foot {
  display: flex;
  justify-content: flex-end;
  gap: 5px;
  padding: 8px 9px 0 0;
}
.btn {
  width: 60px;
  height: 28px;
  box-sizing: border-box;
  font: inherit;
  font-size: 15px;
  padding: 0;
  white-space: nowrap;
}
.btn.ok { background: #6fb0c6; color: #fff; border: 0; }
.btn.cancel { background: #ddd; color: #111; border: 1px solid #aaa; }
</style>
